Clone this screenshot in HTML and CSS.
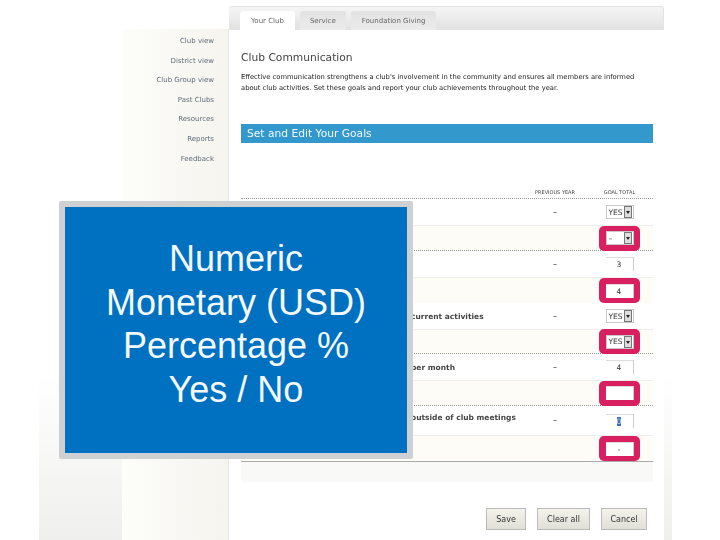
FILE: index.html
```html
<!DOCTYPE html>
<html lang="en">
<head>
    <meta charset="UTF-8">
    <meta name="viewport" content="width=device-width, initial-scale=1.0">
    <title>Club Communication</title>
    <link rel="stylesheet" href="styles.css">
</head>
<body>
    <div class="slide">
        <div class="page">
            <div class="sidebar">
                <a>Club view</a>
                <a>District view</a>
                <a>Club Group view</a>
                <a>Past Clubs</a>
                <a>Resources</a>
                <a>Reports</a>
                <a>Feedback</a>
            </div>
            <div class="main">
                <div class="tabs">
                    <div class="tab active">Your Club</div>
                    <div class="tab">Service</div>
                    <div class="tab long">Foundation Giving</div>
                </div>
                <div class="content">
                    <h1>Club Communication</h1>
                    <p>Effective communication strengthens a club's involvement in the community and ensures all members are informed about club activities. Set these goals and report your club achievements throughout the year.</p>
                    <h2>Set and Edit Your Goals</h2>

                    <div class="table-head">
                        <div class="prev">PREVIOUS YEAR</div>
                        <div class="goal">GOAL TOTAL</div>
                    </div>
                    <div class="row">
                        <div class="label"></div>
                        <div class="prev">–</div>
                        <div class="goal"><div class="select">YES<span class="arrow"></span></div></div>
                    </div>
                    <div class="row alt dotted">
                        <div class="label"></div>
                        <div class="prev"></div>
                        <div class="goal mark"><div class="select">–<span class="arrow"></span></div></div>
                    </div>
                    <div class="row">
                        <div class="label"></div>
                        <div class="prev">–</div>
                        <div class="goal"><div class="input">3</div></div>
                    </div>
                    <div class="row alt">
                        <div class="label"></div>
                        <div class="prev"></div>
                        <div class="goal mark"><div class="input">4</div></div>
                    </div>
                    <div class="row">
                        <div class="label">current activities</div>
                        <div class="prev">–</div>
                        <div class="goal"><div class="select">YES<span class="arrow"></span></div></div>
                    </div>
                    <div class="row alt dotted short">
                        <div class="label"></div>
                        <div class="prev"></div>
                        <div class="goal mark"><div class="select">YES<span class="arrow"></span></div></div>
                    </div>
                    <div class="row">
                        <div class="label">per month</div>
                        <div class="prev">–</div>
                        <div class="goal"><div class="input">4</div></div>
                    </div>
                    <div class="row alt dotted">
                        <div class="label"></div>
                        <div class="prev"></div>
                        <div class="goal mark"><div class="input"></div></div>
                    </div>
                    <div class="row tall">
                        <div class="label raised">outside of club meetings</div>
                        <div class="prev">–</div>
                        <div class="goal"><div class="input"><span class="selected">0</span></div></div>
                    </div>
                    <div class="row alt last">
                        <div class="label"></div>
                        <div class="prev"></div>
                        <div class="goal mark"><div class="input">-</div></div>
                    </div>
                    <div class="table-foot"></div>

                    <div class="buttons">
                        <button>Save</button>
                        <button class="wide">Clear all</button>
                        <button class="mid">Cancel</button>
                    </div>
                </div>
            </div>
        </div>

        <div class="callout">
            Numeric<br>
            Monetary (USD)<br>
            Percentage %<br>
            Yes / No
        </div>
    </div>
</body>
</html>
```

FILE: styles.css
```css
* {
    box-sizing: border-box;
}

body {
    margin: 0;
    background-color: #fff;
    font-family: "DejaVu Sans", sans-serif;
    overflow: hidden;
}

.slide {
    position: relative;
    width: 720px;
    height: 540px;
    overflow: hidden;
}

/* the screenshot under the callout is a soft, upscaled capture */
.page {
    display: flex;
    width: 633px;
    height: 540px;
    margin-left: 39px;
    padding-left: 83px;
    background: linear-gradient(to bottom, #fff 0, #fff 375px, #efefed 540px);
    filter: blur(0.6px);
}

.sidebar {
    display: flex;
    flex-direction: column;
    width: 107px;
    margin-top: 29px;
    padding: 3px 14px 0 0;
    background: linear-gradient(to right, #fdfdfa, #f5f4ee);
    border-right: 1px solid #e6e6e4;
    text-align: right;
}

.sidebar a {
    height: 19.6px;
    font-size: 7px;
    line-height: 19px;
    color: #5f6b7a;
}

.main {
    width: 435px;
    background-color: #fff;
}

.tabs {
    display: flex;
    gap: 5px;
    height: 24px;
    margin-top: 6px;
    padding: 4px 0 0 11px;
    background: linear-gradient(to bottom, #f5f5f5, #e2e2e2);
    border-top: 1px solid #e4e4e4;
    border-right: 1px solid #e4e4e4;
    border-radius: 3px 3px 0 0;
}

.tab {
    padding: 0 10px;
    background: linear-gradient(to bottom, #e2e2e2, #ececec);
    border-radius: 3px 3px 0 0;
    font-size: 7px;
    line-height: 21px;
    color: #666;
}

.tab.long {
    padding: 0 11px;
}

.tab.active {
    padding: 0 11px;
    background: #fff;
}

.content {
    padding: 0 11px 0 12px;
}

h1 {
    margin: 21px 0 0;
    font-size: 10.7px;
    font-weight: normal;
    line-height: 14px;
    color: #444;
}

p {
    width: 400px;
    height: 38px;
    margin: 7px 0 0;
    font-size: 6.75px;
    line-height: 11px;
    color: #222;
}

h2 {
    height: 19px;
    margin: 14px 0 0;
    padding-left: 6px;
    background-color: #3399cc;
    font-size: 10.7px;
    font-weight: normal;
    line-height: 19px;
    color: #f2f8fb;
}

.table-head {
    display: flex;
    justify-content: flex-end;
    align-items: flex-end;
    height: 56px;
    padding-bottom: 3px;
    border-bottom: 1px dotted #999;
    font-size: 5px;
    color: #444;
    text-align: center;
    white-space: nowrap;
}

.table-head .prev {
    font-size: 5px;
}

.table-head .goal {
    height: auto;
}

.row {
    display: flex;
    align-items: center;
    height: 26px;
    color: #333;
}

.row.alt {
    background-color: #fdfcf6;
    border-top: 1px solid #eeeeea;
}

.row.dotted {
    border-bottom: 1px dotted #999;
}

.row.short {
    height: 25px;
}

.row.tall {
    height: 29px;
}

.row.last {
    height: 27px;
    border-bottom: 1px solid #aaa;
}

.label {
    flex: 1;
    padding-left: 170px;
    font-size: 7.5px;
    font-weight: bold;
    color: #444;
}

.label.raised {
    margin-bottom: 6px;
}

.prev {
    width: 60px;
    margin-right: 14px;
    font-size: 8px;
    text-align: center;
}

.goal {
    display: flex;
    justify-content: center;
    align-items: center;
    width: 41px;
    height: 25px;
    margin-right: 13px;
}

.goal.mark {
    background-color: #d81f5f;
    border-radius: 5px;
}

.select,
.input {
    display: flex;
    align-items: center;
    width: 28px;
    height: 14px;
    background-color: #fff;
    font-size: 7.5px;
}

.select {
    justify-content: space-between;
    padding: 0 1px 0 2px;
    border: 1px solid #c8c8c8;
}

.arrow {
    position: relative;
    width: 8px;
    height: 12px;
    background-color: #ddd;
    border: 1px solid #777;
}

.arrow:after {
    content: '';
    position: absolute;
    top: 4px;
    left: 1px;
    border: 2px solid transparent;
    border-top: 3px solid #222;
}

.input {
    justify-content: center;
    border-top: 1px solid #ddd;
    border-right: 1px solid #ccc;
}

.selected {
    background-color: #3a6fc4;
    color: #dde;
}

.table-foot {
    height: 20px;
    background-color: #f9f9f7;
}

.buttons {
    display: flex;
    justify-content: flex-end;
    gap: 11px;
    margin: 26px 6px 0 0;
}

button {
    width: 40px;
    height: 22px;
    padding: 0;
    background: linear-gradient(to bottom, #f4f3ea, #e0dfd8);
    border: 1px solid #bbb;
    font-family: "DejaVu Sans", sans-serif;
    font-size: 8px;
    color: #333;
}

button.wide {
    width: 53px;
}

button.mid {
    width: 46px;
}

.callout {
    position: absolute;
    top: 201px;
    left: 59px;
    width: 354px;
    height: 258px;
    padding-top: 30px;
    background-color: #0070c0;
    border: 6px solid #cfd0d2;
    border-radius: 2px;
    font-family: "Liberation Sans", Arial, sans-serif;
    font-size: 36px;
    line-height: 43.5px;
    color: #f4f9fc;
    text-align: center;
}
```
